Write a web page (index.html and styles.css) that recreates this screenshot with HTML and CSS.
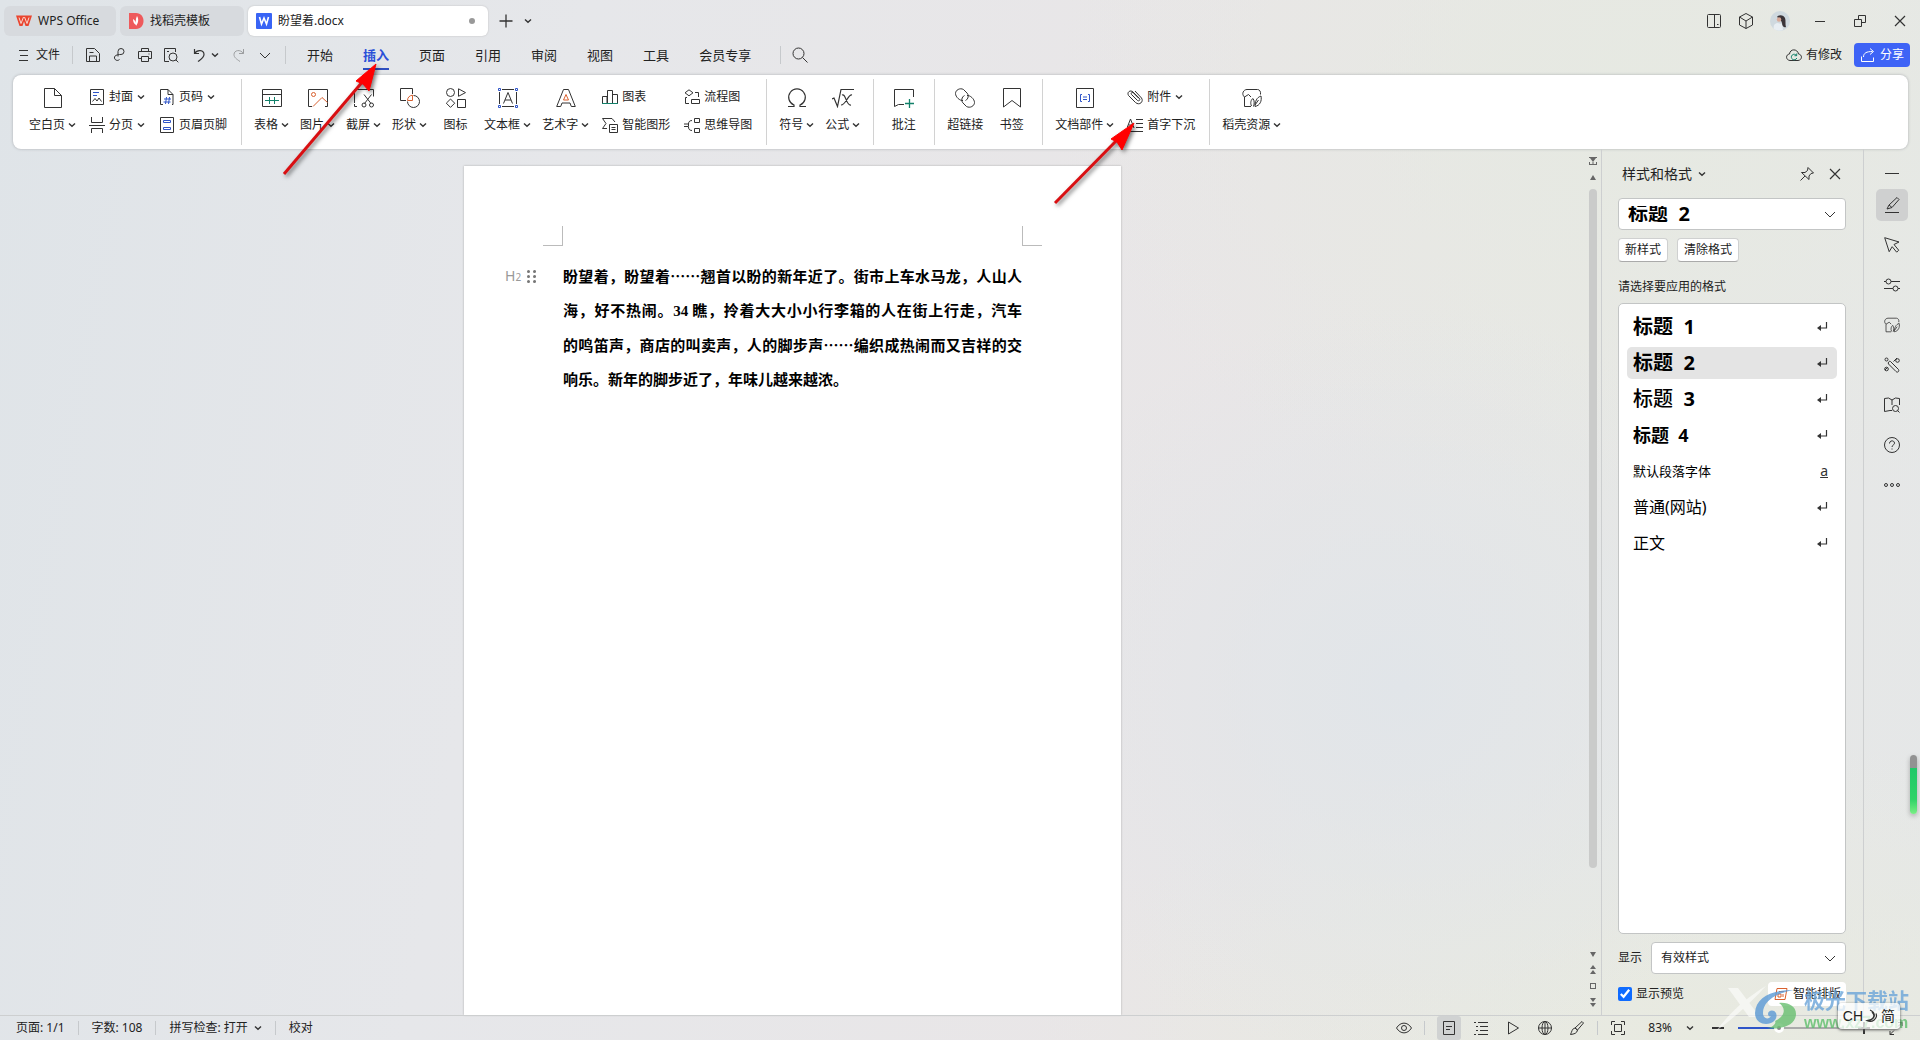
FILE: index.html
```html
<!DOCTYPE html>
<html lang="zh-CN">
<head>
<meta charset="utf-8">
<title>盼望着.docx - WPS Office</title>
<link rel="stylesheet" href="styles.css">
</head>
<body>
<svg class="defs" aria-hidden="true">
  <symbol id="chev" viewBox="0 0 8 8"><path d="M1 2.500 4 5.300 7 2.500" stroke-width="1.400"/></symbol>
  <symbol id="chev-big" viewBox="0 0 16 16"><path d="M3 6l5 5 5-5"/></symbol>
  <symbol id="save" viewBox="0 0 16 16"><path d="M1.500 14.500V1.500h8l5 5v8zM4.500 14v-5h7v5M4.500 5.500h4"/></symbol>
  <symbol id="export" viewBox="0 0 16 16"><path d="M7 9.500V4.500a3 3 0 1 1 3 3c-1.500 0-6 0-6.500 2.500-.5 3 3 4.500 5 2.500"/></symbol>
  <symbol id="print" viewBox="0 0 16 16"><path d="M4.500 4.500v-3h7v3M4.500 11.500h-3v-7h13v7h-3M4.500 9.500h7v5h-7zM11.500 7h1"/></symbol>
  <symbol id="preview" viewBox="0 0 16 16"><path d="M6 14.500H1.500v-13h11V5M12.800 12.800l2.500 2.500M4 4.500h2"/><circle cx="10" cy="10" r="4"/></symbol>
  <symbol id="undo" viewBox="0 0 16 16"><path d="M3.500 2v4.500H8M3.500 6.500c3-4.500 9.500-3.500 9.500 1 0 3-2.500 4.500-6 7" stroke-width="1.200"/></symbol>
  <symbol id="redo" viewBox="0 0 16 16"><path d="M12.500 2v4.500H8M12.500 6.500c-3-4.500-9.500-3.500-9.500 1 0 3 2.500 4.500 6 7"/></symbol>
  <symbol id="search" viewBox="0 0 16 16"><circle cx="6.500" cy="6.500" r="5.500"/><path d="M10.500 10.500l5 5"/></symbol>
  <symbol id="blank" viewBox="0 0 20 20"><path d="M1.500 .5h10l7 7v12h-17zM11.500 .5v7h7"/></symbol>
  <symbol id="cover" viewBox="0 0 16 16"><path d="M1.500 .5h13v15h-13zM3.500 12.500l2.500-3 2 2.500 2-3 2.500 3.500"/><path class="b" d="M4 3.500h6M4 6.500h4"/></symbol>
  <symbol id="break" viewBox="0 0 16 16"><path d="M2.500 0v5.500h11V0M0 8.500h16M2.500 16v-4.500h11V16"/></symbol>
  <symbol id="pnum" viewBox="0 0 16 16"><path d="M4 15.500H1.500V.5H9l5 5v10h-1M9 .5v5h5"/><path class="b" d="M7.500 8l-1 7M10.500 8l-1 7M5 10h7M4.500 13h7"/></symbol>
  <symbol id="hf" viewBox="0 0 16 16"><path d="M1.500 .5h13v15h-13z"/><path class="b" d="M4.500 3.500h7v2h-7zM4.500 10.500h7v2h-7z"/></symbol>
  <symbol id="table" viewBox="0 0 20 20"><path d="M.5 1.500h19v17H.5zM.5 6.500h19"/><path class="g" d="M3 12.500h14M7.500 9v7M12.500 9v7"/></symbol>
  <symbol id="pic" viewBox="0 0 20 20"><path d="M4 18.500H.5v-17h19v17H17"/><circle class="o" cx="5.500" cy="6.500" r="2"/><path class="o" d="M5 18.500l9-9 5.500 5"/></symbol>
  <symbol id="shot" viewBox="0 0 20 20"><path d="M.5 15V1.500h19v7M3 18.500H.5V16M10 6.500l7 9M17.500 6.500l-7 9"/><circle cx="10" cy="17" r="2"/><circle cx="17.500" cy="17" r="2"/></symbol>
  <symbol id="shape" viewBox="0 0 20 20"><path d="M6 12.500H.5V.5h12V6"/><path d="M13.500 7.500a6 6 0 1 1-6 6"/><path class="o" d="M7.500 12.500c0-3 2-5 5-5.300v5.300z"/></symbol>
  <symbol id="icons" viewBox="0 0 20 20"><circle cx="4.500" cy="4.500" r="4"/><path d="M12.500 .8v7.500l7-3.700zM4.500 11l4.200 4.200-4.200 4.200-4.200-4.200zM11.500 11.500h8v8h-8z"/></symbol>
  <symbol id="tbox" viewBox="0 0 20 20"><path d="M4 1.500h12M4 18.500h12M1.500 4v12M18.500 4v12M5.500 15.500l4.500-11 4.500 11M7 12h6"/><path class="b" d="M.5 .5h2v2h-2zM17.500 .5h2v2h-2zM.5 17.500h2v2h-2zM17.500 17.500h2v2h-2z"/></symbol>
  <symbol id="wordart" viewBox="0 0 20 20"><path d="M.7 18.500 7.500 1.500h5l6.800 17h-4l-1.300-3.500H6l-1.300 3.500z"/><path class="o" d="M10 6.500l2.500 5.500h-5z"/></symbol>
  <symbol id="chart" viewBox="0 0 16 16"><path d="M.5 14V7.500H5V14M5.500 14V1.500h5V14M11 5.500h4.500V14"/><path class="g" d="M0 14.500h16"/></symbol>
  <symbol id="smart" viewBox="0 0 16 16"><path d="M5 11.500H.5L4 6.500.5 1.500H10l3 3.500M7.500 7.500h8v8h-8zM9.500 10.500h4M9.500 12.500h4"/></symbol>
  <symbol id="flow" viewBox="0 0 16 16"><path d="M5 .8l4 3-4 3-4-3zM11 3.500h3.500V8M3 8.500H1.500v6H5M7.500 10.500h8v4h-8z"/></symbol>
  <symbol id="mind" viewBox="0 0 16 16"><path d="M10.500 1.500h5v4h-5zM10.500 11.500h5v4h-5zM0 7h4.500v2.500H0M8 3.500c-3 0-3.500 2-3.500 3.500M8 13.500c-3 0-3.500-2-3.500-3.500"/></symbol>
  <symbol id="omega" viewBox="0 0 20 20"><path d="M1 18.500h6v-1.500A8.300 8.300 0 1 1 13 17v1.500h6" stroke-width="1.200"/></symbol>
  <symbol id="formula" viewBox="0 0 22 20"><path d="M0 11l2-1 3.500 8.500L9 1.500h13M10 7c4-2 4 11 9 10M20 7c-4-1-6 10-11 10" stroke-width="1.200"/></symbol>
  <symbol id="comment" viewBox="0 0 20 20"><path d="M19.500 9V1.500H.5v17l4-2H10"/><path class="g" d="M15.500 11v9M11 15.500h9" stroke-width="1.300"/></symbol>
  <symbol id="link" viewBox="0 0 20 20"><path d="M8 12.500C5 13 .5 9 .5 5.500S5-.5 8.500 1.500l3.500 3.500c2 2 1.500 6-1.500 7.500"/><path d="M12 7.500c3-.5 7.500 3.500 7.500 7s-4.500 6-8 4L8 15c-2-2-1.500-6 1.500-7.500"/></symbol>
  <symbol id="bookmark" viewBox="0 0 20 20"><path d="M1.500 .5h17v18.500L10 12.500 1.500 19z"/></symbol>
  <symbol id="parts" viewBox="0 0 20 20"><path d="M1.500 .5h17v19h-17z"/><path class="b" d="M7 6.500H5.500v7H7M13 6.500h1.500v7H13M8 9h4M8 11.500h4"/></symbol>
  <symbol id="clip" viewBox="0 0 16 16"><path d="M4.500 5.500l6 6c1.500 1 3-.5 2-2L6 3C3.500 .5-.5 3 1.500 6.500l7 7c4 3.500 8.500-1 6-4.500L8 2M4.500 5.500c-1-1.500.5-2.500 1.500-2l6 6"/></symbol>
  <symbol id="drop" viewBox="0 0 16 16"><path d="M0 11 3.500 2 7 11M1.500 8h4M9 2.500h7M9 6.500h7M9 10.500h7M1 14.500h15"/></symbol>
  <symbol id="docer" viewBox="0 0 20 20"><path d="M9 18.500H2.500V9C-1 6 1.500 1.500 5 1.500h10.500c2 0 3.500 2 3 5M2.500 9l4-2.500L9 9M9.500 18c-1.500-3-.5-6.500 1.500-7.500 1.500 2 1.500 5 .5 8M13 18.500c0-5 1.500-9 6-10.500 1 5-1 9.500-6 10.500zM13 17l3.500-5"/></symbol>
  <symbol id="ret" viewBox="0 0 12 12"><path d="M10.500 1v6H3" stroke-width="1.200"/><path d="M5 4v6L1 7z" fill="#333" stroke="none"/></symbol>
  <symbol id="pin" viewBox="0 0 16 16"><path d="M9 1.500l5.500 5.500-2.500.5-2 2.500v3.500L2.500 6.500H6L8.500 4.500zM6 10l-4.500 4.500"/></symbol>
  <symbol id="x" viewBox="0 0 16 16"><path d="M3 3l10 10M13 3 3 13" stroke-width="1.200"/></symbol>
  <symbol id="pen" viewBox="0 0 16 16"><path d="M3 12 5 8l8-7.500 2 2L8 10.500zM5 8l3 2.500M1 15.500h14"/></symbol>
</svg>

<header class="titlebar">
  <button class="tab">
    <svg class="i16"><path d="M0 2.500h16L12.500 13h-3L8 8.500 6.500 13h-3z" fill="#ea452f" stroke="none"/><path d="M3 4.500l2 6L7.500 4M8.500 4l2.500 6.500 2-6" stroke="#fbd9d0"/></svg>
    <span>WPS Office</span>
  </button>
  <button class="tab tab-docer">
    <svg class="i16"><path d="M1 0h7c10 0 10 16 0 16H1z" fill="#ee5a5c" stroke="none"/><path d="M5 6c2 1 3 3 3 6-2-1-3-3-3-6zM9 3c2 3 1.500 7-1 10-.5-4-.5-7 1-10z" fill="#fff" stroke="none"/></svg>
    <span>找稻壳模板</span>
  </button>
  <button class="tab tab-doc">
    <svg class="i16"><rect width="16" height="16" rx="1" fill="#3964f5" stroke="none"/><path d="M3.500 4l2 7L8 5l2.500 6 2-7" stroke="#fff" stroke-width="1.600"/></svg>
    <span>盼望着.docx</span><i class="dot"></i>
  </button>
  <button class="bare plus" aria-label="新建"><svg class="i16"><path d="M8 1.500v13M1.500 8h13" stroke-width="1.300"/></svg></button>
  <button class="bare" aria-label="更多标签"><svg class="i8"><use href="#chev"/></svg></button>
  <div class="window">
    <button class="bare" aria-label="分屏"><svg class="i16"><rect x="1.500" y="1.500" width="13" height="13" rx="1"/><path d="M8.500 1.500v13M11 11.500h1.500"/></svg></button>
    <button class="bare" aria-label="应用"><svg class="i16"><path d="M8 .5l6.500 3.500v8L8 15.500 1.500 12V4zM1.500 4 8 8l6.500-4M8 8v7.500"/></svg></button>
    <button class="bare" aria-label="账号"><svg class="i20"><circle cx="10" cy="10" r="10" fill="#cfd9df" stroke="none"/><path d="M4 18c-1-3 0-5 3-6l5 1 1 6c-3 1-6 1-9-1z" fill="#e8eef3" stroke="none"/><path d="M7 6c2-3 7-2 8 1 1 3 0 5 1 9-2 1-4-1-4-4-1-3-2-4-5-6z" fill="#3a3439" stroke="none"/><circle cx="9" cy="8.500" r="2.200" fill="#d8aa9a" stroke="none"/></svg></button>
    <button class="bare ctl" aria-label="最小化"><svg class="i16"><path d="M3 8.500h10"/></svg></button>
    <button class="bare ctl" aria-label="还原"><svg class="i16"><path d="M2.500 6.500h7v7h-7zM6.500 6.500v-4h7v7h-4"/></svg></button>
    <button class="bare ctl" aria-label="关闭"><svg class="i16"><use href="#x"/></svg></button>
  </div>
</header>

<nav class="menubar">
  <button class="bare file"><svg class="ham"><path d="M0 1.500h9M1 6.500h8M0 11.500h9"/></svg>文件</button>
  <i class="vsep"></i>
  <div class="quick">
    <button class="bare" aria-label="保存"><svg class="i16"><use href="#save"/></svg></button>
    <button class="bare" aria-label="输出"><svg class="i16"><use href="#export"/></svg></button>
    <button class="bare" aria-label="打印"><svg class="i16"><use href="#print"/></svg></button>
    <button class="bare" aria-label="打印预览"><svg class="i16"><use href="#preview"/></svg></button>
    <button class="bare undo" aria-label="撤销"><svg class="i16"><use href="#undo"/></svg><svg class="i8"><use href="#chev"/></svg></button>
    <button class="bare faded" aria-label="恢复"><svg class="i16"><use href="#redo"/></svg></button>
    <button class="bare" aria-label="更多"><svg class="i16"><use href="#chev-big"/></svg></button>
  </div>
  <i class="vsep"></i>
  <div class="menus">
    <button class="bare">开始</button><button class="bare active">插入</button><button class="bare">页面</button><button class="bare">引用</button><button class="bare">审阅</button><button class="bare">视图</button><button class="bare">工具</button><button class="bare">会员专享</button>
  </div>
  <i class="vsep"></i>
  <button class="bare find" aria-label="搜索"><svg class="i16"><use href="#search"/></svg></button>
  <button class="bare changed"><svg class="i16"><path d="M4 13.500C-.5 13-.5 7.500 3.500 7 4 1.500 11.500 1.500 12.500 7c4 .5 4 6-.5 6.500z"/><path class="g" d="M10.500 8.500a2.800 2.800 0 1 0 .3 2.500M10.700 6.500v2.200H8.500"/></svg>有修改</button>
  <button class="share"><svg class="i16"><path d="M1.500 9.500v5h12v-4M3.500 10c0-4 3-5.500 9-5.500M10 1.500l3.500 3-3.500 3"/></svg>分享</button>
</nav>

<section class="ribbon">
  <div class="group first">
    <button class="big"><svg class="i20"><use href="#blank"/></svg><span>空白页<svg class="i8"><use href="#chev"/></svg></span></button>
    <div class="col">
      <button class="small"><svg class="i16"><use href="#cover"/></svg>封面<svg class="i8"><use href="#chev"/></svg></button>
      <button class="small"><svg class="i16"><use href="#break"/></svg>分页<svg class="i8"><use href="#chev"/></svg></button>
    </div>
    <div class="col">
      <button class="small"><svg class="i16"><use href="#pnum"/></svg>页码<svg class="i8"><use href="#chev"/></svg></button>
      <button class="small"><svg class="i16"><use href="#hf"/></svg>页眉页脚</button>
    </div>
  </div>
  <div class="group">
    <button class="big"><svg class="i20"><use href="#table"/></svg><span>表格<svg class="i8"><use href="#chev"/></svg></span></button>
    <button class="big"><svg class="i20"><use href="#pic"/></svg><span>图片<svg class="i8"><use href="#chev"/></svg></span></button>
    <button class="big"><svg class="i20"><use href="#shot"/></svg><span>截屏<svg class="i8"><use href="#chev"/></svg></span></button>
    <button class="big"><svg class="i20"><use href="#shape"/></svg><span>形状<svg class="i8"><use href="#chev"/></svg></span></button>
    <button class="big"><svg class="i20"><use href="#icons"/></svg><span>图标</span></button>
    <button class="big"><svg class="i20"><use href="#tbox"/></svg><span>文本框<svg class="i8"><use href="#chev"/></svg></span></button>
    <button class="big"><svg class="i20"><use href="#wordart"/></svg><span>艺术字<svg class="i8"><use href="#chev"/></svg></span></button>
    <div class="col">
      <button class="small"><svg class="i16"><use href="#chart"/></svg>图表</button>
      <button class="small"><svg class="i16"><use href="#smart"/></svg>智能图形</button>
    </div>
    <div class="col">
      <button class="small"><svg class="i16"><use href="#flow"/></svg>流程图</button>
      <button class="small"><svg class="i16"><use href="#mind"/></svg>思维导图</button>
    </div>
  </div>
  <div class="group">
    <button class="big"><svg class="i20"><use href="#omega"/></svg><span>符号<svg class="i8"><use href="#chev"/></svg></span></button>
    <button class="big"><svg class="i22"><use href="#formula"/></svg><span>公式<svg class="i8"><use href="#chev"/></svg></span></button>
  </div>
  <div class="group">
    <button class="big"><svg class="i20"><use href="#comment"/></svg><span>批注</span></button>
  </div>
  <div class="group">
    <button class="big"><svg class="i20"><use href="#link"/></svg><span>超链接</span></button>
    <button class="big"><svg class="i20"><use href="#bookmark"/></svg><span>书签</span></button>
  </div>
  <div class="group">
    <button class="big"><svg class="i20"><use href="#parts"/></svg><span>文档部件<svg class="i8"><use href="#chev"/></svg></span></button>
    <div class="col">
      <button class="small"><svg class="i16"><use href="#clip"/></svg>附件<svg class="i8"><use href="#chev"/></svg></button>
      <button class="small"><svg class="i16"><use href="#drop"/></svg>首字下沉</button>
    </div>
  </div>
  <div class="group last">
    <button class="big"><svg class="i20"><use href="#docer"/></svg><span>稻壳资源<svg class="i8"><use href="#chev"/></svg></span></button>
  </div>
</section>

<main class="work">
  <div class="canvas">
    <article class="page">
      <div class="marks"><i class="mark-l"></i><i class="mark-r"></i></div>
      <h2 class="para">
        <span class="level"><span>H<small>2</small></span><svg class="grip"><path d="M1.500 1.500h.01M7.500 1.500h.01M1.500 6.500h.01M7.500 6.500h.01M1.500 11.500h.01M7.500 11.500h.01"/></svg></span>
        <span class="line">盼望着，盼望着……翘首以盼的新年近了。街市上车水马龙，人山人</span>
        <span class="line">海，好不热闹。<span class="num">34</span> 瞧，拎着大大小小行李箱的人在街上行走，汽车</span>
        <span class="line">的鸣笛声，商店的叫卖声，人的脚步声……编织成热闹而又吉祥的交</span>
        <span class="line end">响乐。新年的脚步近了，年味儿越来越浓。</span>
      </h2>
    </article>
  </div>
  <div class="scroll">
    <svg class="s10"><path d="M1 1.500h8M1 8.500h8M1.500 6v2M8.500 6v2M5 6v2"/><path class="f" d="M5 6l3-4H2z"/></svg>
    <svg class="s10"><path class="f" d="M5 3l3 5H2z"/></svg>
    <i class="track"><i class="thumb"></i></i>
    <svg class="s10"><path class="f" d="M5 8l3-5H2z"/></svg>
    <svg class="s10"><path class="f" d="M5 0l3 4H2zM5 5l3 4H2z"/></svg>
    <svg class="s10"><rect x="2.500" y="2.500" width="5" height="5"/></svg>
    <svg class="s10"><path class="f" d="M5 5l3-4H2zM5 10l3-4H2z"/></svg>
  </div>
  <aside class="panel">
    <div class="panel-head">
      <h3>样式和格式</h3><svg class="i8"><use href="#chev"/></svg>
      <button class="bare pin" aria-label="固定"><svg class="i16"><use href="#pin"/></svg></button>
      <button class="bare" aria-label="关闭窗格"><svg class="i16"><use href="#x"/></svg></button>
    </div>
    <div class="pick current"><select aria-label="当前样式"><option>标题&nbsp;&nbsp;2</option></select><svg class="i16"><use href="#chev-big"/></svg></div>
    <div class="actions"><button>新样式</button><button>清除格式</button></div>
    <p class="hint">请选择要应用的格式</p>
    <ul class="styles">
      <li class="h1">标题&nbsp;&nbsp;1<svg class="i12"><use href="#ret"/></svg></li>
      <li class="h2 on">标题&nbsp;&nbsp;2<svg class="i12"><use href="#ret"/></svg></li>
      <li class="h3"><span>标题&nbsp;&nbsp;<b>3</b></span><svg class="i12"><use href="#ret"/></svg></li>
      <li class="h4">标题&nbsp;&nbsp;4<svg class="i12"><use href="#ret"/></svg></li>
      <li class="def">默认段落字体<u>a</u></li>
      <li>普通(网站)<svg class="i12"><use href="#ret"/></svg></li>
      <li>正文<svg class="i12"><use href="#ret"/></svg></li>
    </ul>
    <div class="show">
      <label for="show">显示</label>
      <div class="pick"><select id="show"><option>有效样式</option></select><svg class="i16"><use href="#chev-big"/></svg></div>
    </div>
    <div class="foot">
      <label><input type="checkbox" checked>显示预览</label>
      <button><svg class="i16"><path class="o" d="M4 2.500h10l-2 11H2zM6 5.500h5M5 8h3v3H5zM10 8v3"/></svg>智能排版</button>
    </div>
  </aside>
  <nav class="rail">
    <button class="bare short" aria-label="收起"><svg class="i16"><path d="M1 8.500h14"/></svg></button>
    <button class="bare on" aria-label="样式"><svg class="i16"><use href="#pen"/></svg></button>
    <button class="bare" aria-label="选择"><svg class="i16"><path d="M.7 .7l4.500 14 3-5 4.500 5.500 2-2L10 7.500l5-2.500z"/></svg></button>
    <button class="bare" aria-label="设置"><svg class="i16"><circle cx="4.500" cy="4.500" r="2.500"/><circle cx="11.500" cy="11.500" r="2.500"/><path d="M0 4.500h2M7 4.500h9M0 11.500h9M14 11.500h2"/></svg></button>
    <button class="bare" aria-label="稻壳"><svg class="i16"><use href="#docer"/></svg></button>
    <button class="bare" aria-label="工具箱"><svg class="i16"><path d="M6.500 4.500l8 8c1 2-1 3.500-2.500 2L4.500 7c-1-1.500 1-3.500 2-2.500zM9.500 4.500 13 1M3.500 10.500 1 13"/><circle cx="2.500" cy="2.500" r="1.500"/><circle cx="13.500" cy="3.500" r="1.800"/><circle cx="2.500" cy="12" r="1.800"/></svg></button>
    <button class="bare" aria-label="文档检索"><svg class="i16"><path d="M8 13.500H6l-5.500 1v-13l4-.5L8 3l3.500-2 4 .5V8M8 3v5M13.500 13.500l2 2"/><circle cx="11.500" cy="11.500" r="3"/></svg></button>
    <button class="bare" aria-label="帮助"><svg class="i16"><circle cx="8" cy="8" r="7.500"/><path d="M5.500 6.500C5.500 3 10.500 3 10.500 6.200 10.500 8 8 8 8 10M8 11.500v1"/></svg></button>
    <button class="bare" aria-label="更多"><svg class="i16"><circle cx="2" cy="8" r="1.500"/><circle cx="8" cy="8" r="1.500"/><circle cx="14" cy="8" r="1.500"/></svg></button>
  </nav>
</main>

<footer class="status">
  <span>页面: 1/1</span><i class="vsep"></i><span>字数: 108</span><i class="vsep"></i>
  <button class="bare spell">拼写检查: 打开<svg class="i8"><use href="#chev"/></svg></button><i class="vsep"></i><button class="bare">校对</button>
  <div class="views">
    <button class="bare" aria-label="护眼"><svg class="i16"><path d="M.5 8c4-6.500 11-6.500 15 0-4 6.500-11 6.500-15 0z"/><circle cx="8" cy="8" r="2.500"/></svg></button>
    <i class="vsep"></i>
    <button class="bare on" aria-label="页面视图"><svg class="i16"><path d="M2.500 1.500h11v13h-11zM5 6.500h6M5 9.500h4"/></svg></button>
    <button class="bare" aria-label="大纲"><svg class="i16"><path d="M1 2.500h2M5 2.500h10M3 6.500h2M7 6.500h8M3 10.500h2M7 10.500h8M1 14.500h2M5 14.500h10"/></svg></button>
    <button class="bare" aria-label="阅读"><svg class="i16"><path d="M3.500 2l10 6-10 6z"/></svg></button>
    <button class="bare" aria-label="网页"><svg class="i16"><circle cx="8" cy="8" r="6.500"/><ellipse cx="8" cy="8" rx="3" ry="6.500"/><path d="M1.500 8h13M8 1.500v13"/></svg></button>
    <button class="bare" aria-label="写作"><svg class="i16"><path d="M6 8l7-6.500 1.500 1.500L8.500 10zM6 8c-3 .5-3 3.500-4.500 6.500C5 14 8 13.500 8.500 10z"/></svg></button>
    <i class="vsep"></i>
    <button class="bare" aria-label="适合页面"><svg class="i16"><path d="M1.500 5V1.500H5M11 1.500h3.500V5M14.500 11v3.500H11M5 14.500H1.500V11M4.500 4.500h7v7h-7z"/></svg></button>
    <button class="bare zoom">83%<svg class="i8"><use href="#chev"/></svg></button>
    <button class="bare" aria-label="缩小"><svg class="i16"><path d="M2 8h12" stroke-width="2"/></svg></button>
    <input type="range" aria-label="缩放" min="0" max="100" value="38">
    <button class="bare" aria-label="放大"><svg class="i16"><path d="M2 8h12M8 2v12" stroke-width="2"/></svg></button>
    <button class="bare" aria-label="全屏"><svg class="i16"><path d="M10 2.500h4V6M14 2.500l-4 4M6 14.500H2V11M2 14.500l4-4"/></svg></button>
  </div>
</footer>

<svg class="arrow arrow-insert" viewBox="0 0 110 125"><path d="M4 113 84 19" stroke="#d90f12" stroke-width="3"/><path d="M96 3 76 20l7 3 6 7z" fill="#f00" stroke="#f00"/></svg>
<svg class="arrow arrow-drop" viewBox="0 0 100 95"><path d="M5 83 69 18" stroke="#d90f12" stroke-width="3"/><path d="M84 3 61 19l6 3 5 8z" fill="#f00" stroke="#f00"/></svg>
<i class="meter"></i>
<div class="brand">
  <svg viewBox="0 0 90 50"><path d="M2 46C14 30 30 14 52 1 40 14 24 30 2 46zM14 3h10l22 29H35z" fill="#fff" fill-opacity=".7" stroke="none"/><path d="M80 5C58 5 42 12 41 28c0 7 5 11 11 11 8 0 12-6 10-11-2-4-8-3-8 1 0 2 2 3 3 2-2 4-8 3-8-3C49 16 62 8 80 5z" fill="#5b9ad6" stroke="none"/><path d="M65 18c6 4 8 12-4 18 2 3-4 7-8 7 17 2 29-4 29-14 0-8-8-12-17-11z" fill="#68bf70" stroke="none"/></svg>
  <div><b>极光下载站</b><em>www.xz7.com</em></div>
</div>
<div class="ime">CH<svg class="i16"><path d="M6 2c6 3 6 8-1 11M8 4c4 4 1 8-5 8.500 5 3 11-2 9-7" stroke-width="1.200"/></svg>简</div>
</body>
</html>
```

FILE: styles.css
```css
* { box-sizing: border-box; }

body {
  margin: 0;
  height: 100vh;
  display: flex;
  flex-direction: column;
  overflow: hidden;
  position: relative;
  font: 12px/16px "Noto Sans", "Noto Sans CJK SC", sans-serif;
  color: #222;
  background:
    radial-gradient(ellipse 420px 380px at 73% 66%, #e1e5e9 0%, transparent 100%),
    radial-gradient(ellipse 600px 420px at 86% 10%, #e6e9e2 0%, transparent 100%),
    radial-gradient(ellipse 700px 300px at 90% 100%, #e8eae0 0%, transparent 100%),
    linear-gradient(100deg, #dfe4e8 0%, #e6e7ea 28%, #e9e6e7 62%, #e8e8e5 78%, #e5e7e8 100%);
}

button, input, select { font: inherit; color: inherit; margin: 0; }
button { padding: 0; border: 0; background: none; }
i { display: block; font-style: normal; }

svg { display: block; flex: none; fill: none; stroke: #333; stroke-width: 1; }
.defs { position: absolute; width: 0; height: 0; }
.b { stroke: #2f55c8; }
.g { stroke: #12816a; }
.o { stroke: #d9602e; }
.f { fill: #666; stroke: none; }
.i8 { width: 8px; height: 8px; }
.s10 { width: 10px; height: 10px; stroke: #666; }
.i12 { width: 12px; height: 12px; }
.i16 { width: 16px; height: 16px; }
.i20 { width: 20px; height: 20px; overflow: visible; }
.i22 { width: 22px; height: 20px; }

.bare { display: flex; align-items: center; white-space: nowrap; }
.vsep { width: 1px; height: 18px; background: #c6c9cc; flex: none; }

/* title bar */
.titlebar { display: flex; align-items: center; gap: 4px; padding: 6px 12px 1px 4px; flex: none; }
.tab { display: flex; align-items: center; gap: 6px; height: 30px; width: 112px; padding: 0 12px; border-radius: 6px; background: #d7dade; white-space: nowrap; }
.tab-docer { width: 124px; padding: 0 8px; }
.tab-doc { width: 240px; padding: 0 13px 0 8px; background: #fff; box-shadow: 0 0 2px #bbb; }
.dot { width: 6px; height: 6px; border-radius: 3px; background: #999; margin-left: auto; }
.plus { margin: 0 6px; }
.window { display: flex; align-items: center; gap: 16px; margin-left: auto; }
.ctl { margin-left: 6px; }
.ctl + .ctl { margin-left: 8px; }

/* menu bar */
.menubar { display: flex; align-items: center; height: 38px; padding: 0 10px 2px 19px; flex: none; }
.file { gap: 8px; margin-right: 12px; }
.ham { width: 9px; height: 13px; }
.quick { display: flex; gap: 10px; margin: 0 12px; }
.undo { gap: 4px; padding: 0 2px; }
.faded { opacity: .4; }
.menus { display: flex; gap: 30px; margin: 0 29px 0 21px; font-size: 13px; }
.menus .bare { height: 30px; border: solid transparent; border-width: 2px 0; }
.menus .active { color: #2b50d8; font-weight: 700; border-bottom-color: #2f4fc0; }
.find { margin-left: 11px; }
.changed { gap: 4px; margin: 0 12px 0 auto; }
.share { display: flex; align-items: center; gap: 4px; height: 24px; padding: 0 6px; border-radius: 4px; background: #3e63f6; color: #fff; white-space: nowrap; }
.share svg { stroke: #fff; }

/* ribbon */
.ribbon { display: flex; height: 74px; margin: 0 12px 0 13px; flex: none; background: #fff; border-radius: 8px; box-shadow: 0 0 3px #a9acb0; }
.group { display: flex; margin: 4px 0; padding: 9px 7px 0; border-right: 1px solid #d2d2d2; }
.first { padding-left: 11px; }
.last { border-right: 0; }
.big { display: flex; flex-direction: column; align-items: center; gap: 9px; height: 45px; min-width: 46px; padding: 0 6px 0 5px; white-space: nowrap; }
.big span { display: flex; align-items: center; gap: 3px; }
.col { display: flex; flex-direction: column; gap: 12px; margin-top: 1px; padding: 0 7px; }
.small { display: flex; align-items: center; gap: 4px; white-space: nowrap; }

/* work area */
.work { flex: 1; min-height: 0; display: flex; }
.canvas { flex: 1; min-width: 0; display: flex; justify-content: center; padding-top: 17px; }
.page { width: 657px; background: #fff; padding-top: 60px; box-shadow: 0 0 2px #aaa; }
.marks { display: flex; justify-content: space-between; margin: 0 79px; }
.mark-l, .mark-r { width: 20px; height: 20px; border: solid #bbb; border-width: 0 1px 1px 0; }
.mark-r { border-width: 0 0 1px 1px; }
.para { position: relative; margin: 13px 99px 0; font: 700 15px/34px "Noto Sans CJK SC", sans-serif; color: #000; }
.line { display: block; white-space: nowrap; text-align: justify; text-align-last: justify; }
.line.end { text-align-last: left; }
.num { font-family: "Liberation Serif", serif; }
.level { position: absolute; left: -58px; top: 0; display: flex; align-items: center; gap: 6px; font: 14px/34px "Noto Sans", sans-serif; color: #999; }
.level small { font-size: 10px; }
.grip { width: 9px; height: 13px; stroke: #777; stroke-width: 3; stroke-linecap: round; }

.scroll { width: 16px; display: flex; flex-direction: column; align-items: center; gap: 6px; padding: 7px 1px 8px 0; flex: none; }
.track { flex: 1; width: 8px; margin-top: 1px; }
.thumb { width: 8px; height: 90%; border-radius: 4px; background: #cacbca; }

.panel { width: 263px; flex: none; display: flex; flex-direction: column; padding: 16px 17px 9px 16px; border: solid #cdcfd0; border-width: 0 1px; }
.panel-head { display: flex; align-items: center; gap: 6px; padding: 0 3px 0 4px; }
.panel h3 { margin: 0; font-size: 14px; font-weight: 400; line-height: 18px; }
.pin { margin: 0 6px 0 auto; }
.pick { display: flex; align-items: center; height: 32px; padding: 0 8px 0 0; border: 1px solid #c3c5c5; border-radius: 4px; background: #fff; position: relative; }
.pick select { appearance: none; border: 0; background: none; flex: 1; height: 30px; padding: 0 9px; }
.pick svg { position: absolute; right: 7px; top: 7px; pointer-events: none; }
.current { margin-top: 15px; }
.current select { font-size: 20px; font-weight: 700; color: #000; }
.actions { display: flex; gap: 9px; margin-top: 8px; }
.actions button { height: 24px; padding: 0 6px; border: 1px solid #cfd0d0; border-bottom-color: #aaa; border-radius: 4px; background: #fff; }
.hint { margin: 17px 0 8px; }
.styles { flex: 1; list-style: none; margin: 0; padding: 7px 8px; border: 1px solid #c3c5c5; border-radius: 5px; background: #fff; }
.styles li { display: flex; align-items: center; justify-content: space-between; height: 32px; margin-bottom: 4px; padding: 0 9px 0 6px; border-radius: 5px; font-size: 16px; color: #000; }
.styles .h1, .styles .h2, .styles .h3 { font-size: 20px; font-weight: 700; }
.styles .h3 { font-weight: 500; }
.styles .h4 { font-size: 18px; font-weight: 700; }
.styles .def { font-size: 13px; }
.styles .on { background: #e4e4e4; }
.styles u { font-size: 14px; color: #333; }
.show { display: flex; align-items: center; gap: 9px; margin-top: 8px; }
.show .pick { flex: 1; }
.foot { display: flex; align-items: center; justify-content: space-between; margin-top: 8px; }
.foot label { display: flex; align-items: center; gap: 4px; }
.foot input { width: 14px; height: 14px; accent-color: #0f6bff; }
.foot button { display: flex; align-items: center; gap: 4px; height: 24px; padding: 0 5px; border-radius: 4px; background: #fff; }

.rail { width: 56px; flex: none; display: flex; flex-direction: column; align-items: center; gap: 8px; padding: 16px 1px 0 0; }
.rail .bare { width: 32px; height: 32px; justify-content: center; border-radius: 5px; }
.rail .short { height: 16px; }
.rail .on { background: #cfd0d0; }

/* status bar */
.status { display: flex; align-items: center; gap: 13px; height: 25px; padding: 0 16px; flex: none; border-top: 1px solid #cdcfd0; white-space: nowrap; }
.spell { gap: 6px; }
.status .vsep { height: 14px; }
.views { display: flex; align-items: center; gap: 12px; margin-left: auto; }
.views .bare + .bare { margin-left: 4px; }
.views .on { width: 24px; height: 24px; justify-content: center; background: #d0d2d2; border-radius: 3px; }
.views .on + .bare { margin-left: 0; }
.views .bare + .zoom { margin-left: 10px; gap: 14px; }
.views input { appearance: none; width: 106px; height: 10px; background: linear-gradient(90deg, #2f55c8 38%, #aaa 38%) center / 100% 2px no-repeat; }
.views input::-webkit-slider-thumb { appearance: none; width: 10px; height: 10px; border: 3px solid #fff; border-radius: 5px; background: #888; }

/* overlays */
.arrow { position: absolute; filter: drop-shadow(2px 2px 2px #0008); pointer-events: none; }
.arrow-insert { left: 280px; top: 61px; width: 110px; height: 125px; }
.arrow-drop { left: 1050px; top: 120px; width: 100px; height: 95px; }
.meter { position: absolute; right: 3px; top: 755px; width: 7px; height: 59px; border-radius: 4px; background: linear-gradient(#929292 22%, #20c868 22%, #2fd367 75%, #79ee84); box-shadow: 0 2px 5px #0004; }
.brand { position: absolute; right: 11px; bottom: 5px; display: flex; align-items: center; opacity: .8; pointer-events: none; }
.brand svg { width: 90px; height: 50px; }
.brand div { display: flex; flex-direction: column; }
.brand b { font-size: 21px; line-height: 26px; color: #6ba5d9; }
.brand em { font: 700 16px/20px "Liberation Sans", sans-serif; color: #5fbf6d; }
.ime { position: absolute; right: 20px; bottom: 11px; display: flex; align-items: center; height: 26px; padding: 0 5px; gap: 1px; border-radius: 4px; background: #ffffffc0; box-shadow: 0 1px 3px #555; font: 14px/20px "Liberation Sans", "Noto Sans CJK SC", sans-serif; }
```
